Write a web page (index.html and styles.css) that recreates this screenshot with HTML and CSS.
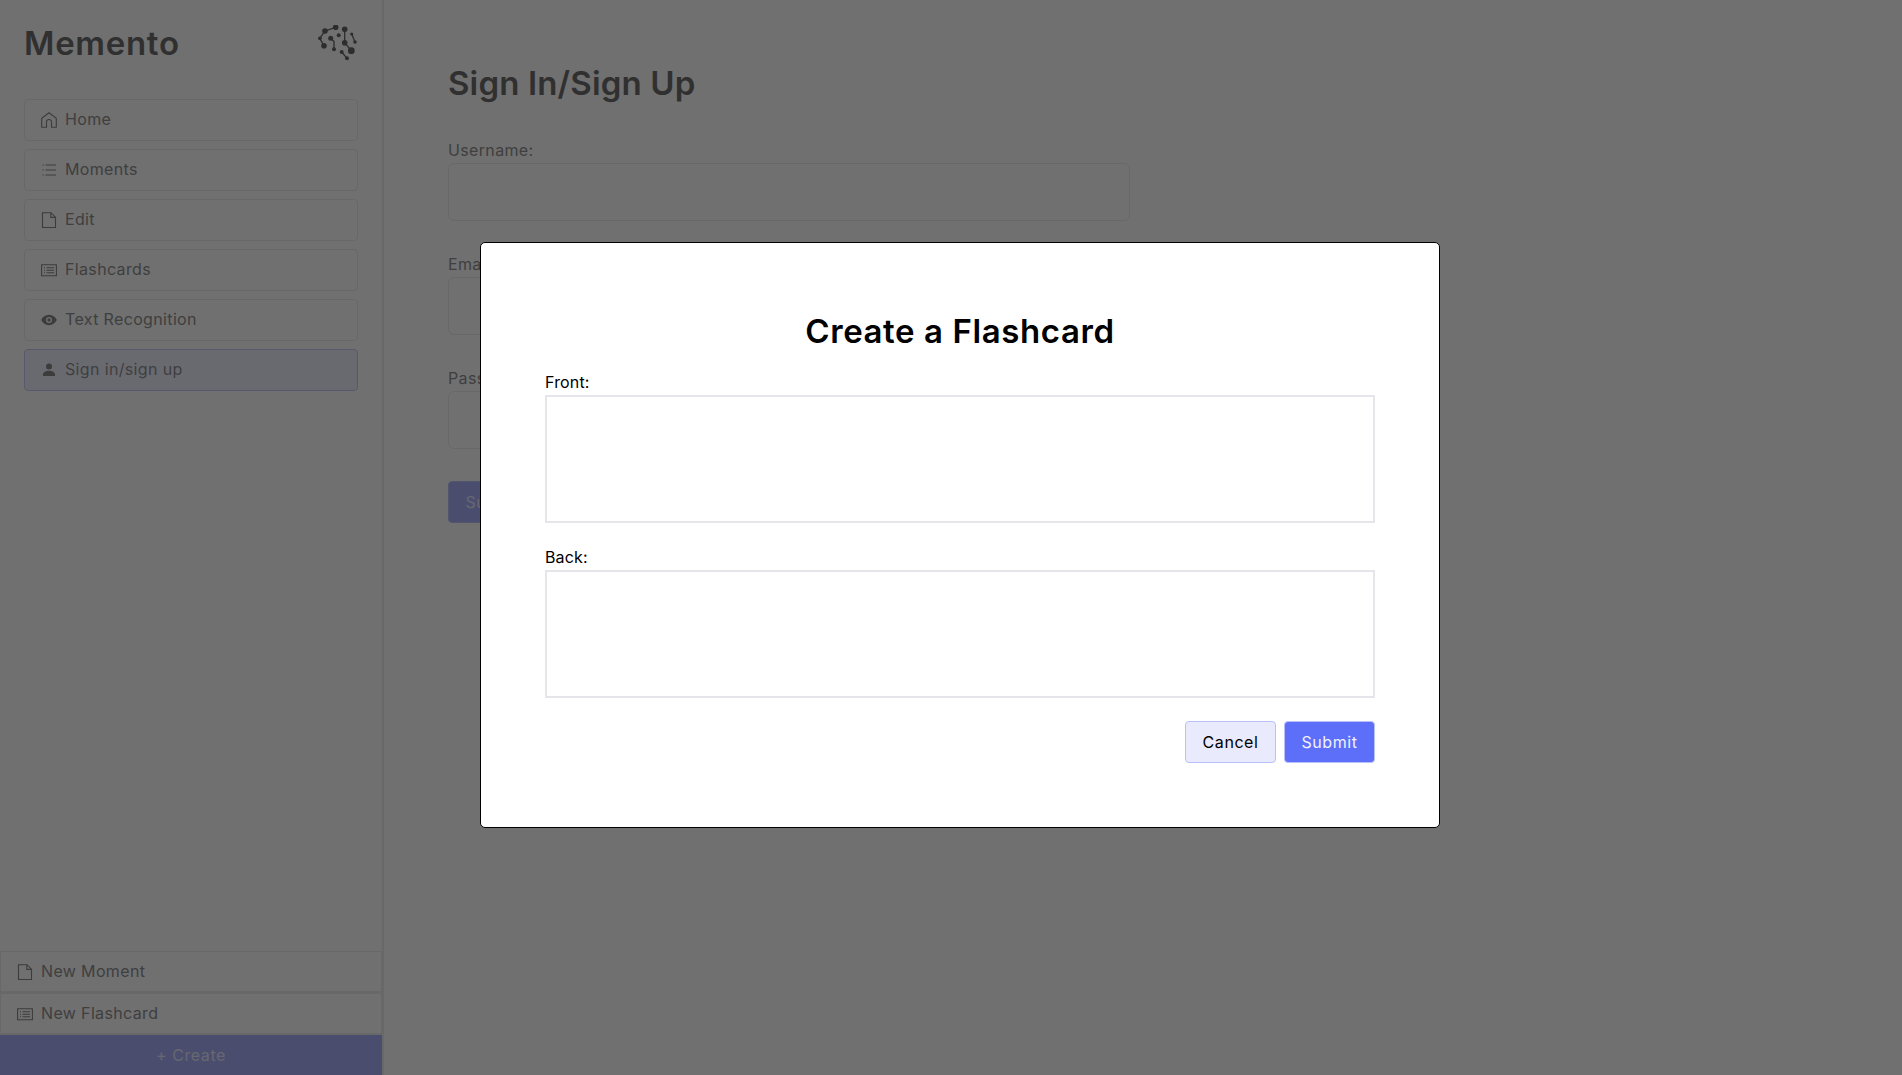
FILE: index.html
```html
<!DOCTYPE html>
<html lang="en">
<head>
<meta charset="utf-8">
<title>Memento</title>
<link rel="stylesheet" href="styles.css">
</head>
<body>
<div class="app">
  <aside class="sidebar">
    <header class="brand">
      <span class="brand-name">Memento</span>
      <svg class="logo" viewBox="0 0 40 37">
        <path class="logo-line" d="M17.700 2.300 7 6 1.700 13.300 6 20.700M12.700 13.300 16 16.500 16 24.300M26.700 4.300V17.700L33.300 25.700M33.700 9 37 17M23.700 27 29 33.300M20.700 10.300 20.700 10.300"/>
        <circle cx="17.700" cy="2.300" r="2.800"/><circle cx="7" cy="6" r="2.800"/><circle cx="1.900" cy="13.300" r="1.900"/><circle cx="6" cy="20.700" r="2.800"/><circle cx="12.700" cy="13.300" r="2.500"/><circle cx="16" cy="24.300" r="2"/><circle cx="20.700" cy="10.300" r="2"/><circle cx="26.700" cy="4.300" r="2.800"/><circle cx="26.700" cy="17.700" r="2.800"/><circle cx="33.300" cy="25.700" r="3.400"/><circle cx="33.700" cy="9" r="1.600"/><circle cx="37" cy="17" r="1.800"/><circle cx="23.700" cy="27" r="2"/><circle cx="29" cy="33.300" r="2"/>
      </svg>
    </header>
    <nav class="nav">
      <a class="nav-item">
        <svg class="icon" viewBox="0 0 16 16"><path class="line" d="M.7 15.300V6.300L8 .8l7.300 5.500v9H10.500V10a2.500 2.500 0 0 0-5 0v5.300z"/></svg>
        <span>Home</span>
      </a>
      <a class="nav-item">
        <svg class="icon" viewBox="0 0 16 16"><path class="line" d="M4.500 3h10.500M4.500 8h10.500M4.500 13h10.500"/><path class="line" d="M1.500 3h1.200M1.500 8h1.200M1.500 13h1.200"/></svg>
        <span>Moments</span>
      </a>
      <a class="nav-item">
        <svg class="icon" viewBox="0 0 16 16"><path class="line" d="M1.500 .7h8.500l4.500 4.500v10.300h-13zM9.800 .7v4.700h4.700"/></svg>
        <span>Edit</span>
      </a>
      <a class="nav-item">
        <svg class="icon" viewBox="0 0 16 16"><path class="line" d="M.6 2.800h14.800v10.900H.6zM3 5.800h1M5.500 5.800h7.500M3 8.200h1M5.500 8.200h7.500M3 10.700h1M5.500 10.700h7.500"/></svg>
        <span>Flashcards</span>
      </a>
      <a class="nav-item">
        <svg class="icon" viewBox="0 0 16 16"><path fill-rule="evenodd" d="M8 2.800C4.500 2.800 1.600 5 .2 8c1.400 3 4.300 5.200 7.800 5.200s6.400-2.200 7.800-5.200C14.400 5 11.500 2.800 8 2.800zM8 5a3 3 0 1 1 0 6 3 3 0 0 1 0-6z"/><circle cx="8" cy="8" r="1.700"/></svg>
        <span>Text Recognition</span>
      </a>
      <a class="nav-item is-active">
        <svg class="icon" viewBox="0 0 16 16"><circle cx="8" cy="4.500" r="3"/><path d="M2 14v-1.500C2 10.300 5 8.800 8 8.800s6 1.500 6 3.700V14z"/></svg>
        <span>Sign in/sign up</span>
      </a>
    </nav>
    <div class="quick">
      <a class="quick-item">
        <svg class="icon" viewBox="0 0 16 16"><path class="line" d="M1.500 .7h8.500l4.500 4.500v10.300h-13zM9.800 .7v4.700h4.700"/></svg>
        <span>New Moment</span>
      </a>
      <a class="quick-item">
        <svg class="icon" viewBox="0 0 16 16"><path class="line" d="M.6 2.800h14.800v10.900H.6zM3 5.800h1M5.500 5.800h7.500M3 8.200h1M5.500 8.200h7.500M3 10.700h1M5.500 10.700h7.500"/></svg>
        <span>New Flashcard</span>
      </a>
      <button class="create">+ Create</button>
    </div>
  </aside>
  <main class="main">
    <h1 class="title">Sign In/Sign Up</h1>
    <form class="form">
      <label class="field"><span>Username:</span><input class="input" type="text"></label>
      <label class="field"><span>Email:</span><input class="input" type="text"></label>
      <label class="field"><span>Password:</span><input class="input" type="password"></label>
      <button class="form-submit" type="button">Submit</button>
    </form>
  </main>
</div>
<div class="overlay">
  <section class="modal">
    <h2 class="modal-title">Create a Flashcard</h2>
    <label class="modal-field"><span>Front:</span><textarea class="area"></textarea></label>
    <label class="modal-field"><span>Back:</span><textarea class="area"></textarea></label>
    <div class="actions">
      <button class="btn btn-light" type="button">Cancel</button>
      <button class="btn btn-primary" type="button">Submit</button>
    </div>
  </section>
</div>
</body>
</html>
```
FILE: styles.css
```css
* { box-sizing: border-box; }
html, body { margin: 0; height: 100%; }
body {
  font-family: "Inter", "Noto Sans", sans-serif;
  font-size: 16px;
  letter-spacing: .35px;
  color: #111;
  background: #fff;
  overflow: hidden;
}
button { font: inherit; letter-spacing: .55px; }
.app { display: flex; height: 1075px; }
.sidebar {
  width: 384px;
  flex: none;
  display: flex;
  flex-direction: column;
  border-right: 2px solid #ececec;
}
.brand {
  display: flex;
  justify-content: space-between;
  align-items: flex-start;
  padding: 24px 24px 0;
  height: 99px;
}
.brand-name {
  font-size: 33px;
  line-height: 38px;
  letter-spacing: .7px;
  font-weight: 600;
  color: #6e6e6e;
}
.logo { width: 40px; height: 37px; margin-top: 1px; fill: #666; }
.logo-line { fill: none; stroke: #666; stroke-width: 1.300; }
.nav { display: flex; flex-direction: column; gap: 8px; padding: 0 24px; }
.nav-item, .quick-item {
  display: flex;
  align-items: center;
  gap: 8px;
  color: #909090;
  line-height: 24px;
}
.nav-item span, .quick-item span { position: relative; top: -1px; }
.nav-item {
  height: 42px;
  padding: 0 16px;
  border: 1px solid #ececf2;
  border-radius: 4px;
}
.nav-item.is-active { background: #f0f2ff; border-color: #c5cbf8; }
.icon { width: 16px; height: 16px; flex: none; fill: #888; }
.line { fill: none; stroke: #888; stroke-width: 1.100; }
.quick { margin-top: auto; display: flex; flex-direction: column; }
.quick-item {
  height: 42px;
  padding: 0 16px;
  border: 1px solid #ededed;
  border-bottom-width: 2px;
}
.create {
  height: 40px;
  border: 0;
  background: #a9b0fb;
  color: #e8eaff;
}
.main { flex: 1; padding: 62px 64px; }
.title {
  margin: 0 0 35px;
  font-size: 33px;
  line-height: 42px;
  letter-spacing: .15px;
  font-weight: 600;
  color: #6e6e6e;
}
.form { display: flex; flex-direction: column; width: 682px; }
.field { display: flex; flex-direction: column; margin-bottom: 32px; color: #909090; }
.field span { line-height: 23px; height: 24px; display: block; }
.input {
  height: 58px;
  border: 1px solid #ececf2;
  border-radius: 6px;
  background: #fff;
}
.form-submit {
  width: 91px;
  height: 42px;
  padding-bottom: 2px;
  border: 1px solid #bcc4f6;
  border-radius: 4px;
  background: #a9b0fb;
  color: #e8eaff;
}
.overlay {
  position: fixed;
  inset: 0;
  background: rgba(0, 0, 0, .56);
  display: flex;
  justify-content: center;
  align-items: flex-start;
  padding-left: 18px;
  padding-top: 242px;
}
.modal {
  width: 960px;
  height: 586px;
  background: #fff;
  border: 1px solid #000;
  border-radius: 5px;
  padding: 63px 64px 0;
  color: #000;
}
.modal-title {
  margin: 0 0 15px;
  text-align: center;
  font-size: 33px;
  line-height: 50px;
  letter-spacing: .6px;
  font-weight: 600;
  color: #000;
}
.modal-field { display: block; margin-bottom: 23px; letter-spacing: .15px; }
.modal-field span { display: block; line-height: 22px; height: 24px; }
.area {
  display: block;
  width: 100%;
  height: 128px;
  border: 2px solid #e6e6ea;
  background: #fff;
  resize: none;
}
.actions { display: flex; justify-content: flex-end; gap: 8px; }
.btn {
  width: 91px;
  height: 42px;
  padding-bottom: 2px;
  border: 1px solid #b8c0fa;
  border-radius: 4px;
}
.btn-light { background: #e9eafb; color: #000; }
.btn-primary { background: #5d6ff8; color: #f0f2ff; }
```
